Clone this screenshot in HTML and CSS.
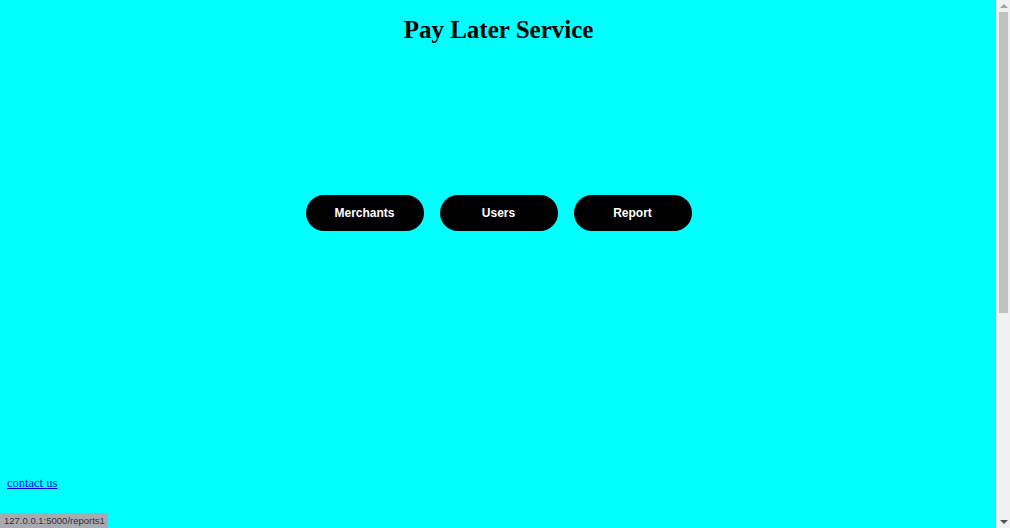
FILE: index.html
```html
<!DOCTYPE html>
<html>
<head>
<meta charset="utf-8">
<title>Pay Later Service</title>
<link rel="stylesheet" href="styles.css">
</head>
<body>
<div class="page">
  <h1 class="title">Pay Later Service</h1>
  <nav class="actions">
    <a class="btn" href="#">Merchants</a>
    <a class="btn" href="#">Users</a>
    <a class="btn" href="#">Report</a>
  </nav>
  <footer class="footer">
    <a class="contact" href="#">contact us</a>
  </footer>
</div>
<div class="scrollbar">
  <span class="arrow arrow-up"></span>
  <span class="track"><span class="thumb"></span></span>
  <span class="arrow arrow-down"></span>
</div>
<div class="status">127.0.0.1:5000/reports1</div>
</body>
</html>
```
FILE: styles.css
```css
html, body {
  margin: 0;
  padding: 0;
  background: #00ffff;
  overflow: hidden;
}
.page {
  display: flex;
  flex-direction: column;
  width: 997px;
  height: 528px;
  font-family: "Liberation Serif", "Times New Roman", serif;
}
.title {
  margin: 14px 0 0;
  text-align: center;
  font-size: 25px;
  font-weight: bold;
  color: #000;
  line-height: 32px;
}
.actions {
  display: flex;
  justify-content: center;
  gap: 16px;
  margin-top: 149px;
}
.btn {
  display: flex;
  align-items: center;
  justify-content: center;
  width: 118px;
  height: 36px;
  border-radius: 18px;
  background: #000;
  color: #fff;
  text-decoration: none;
  font-family: "Liberation Sans", Arial, sans-serif;
  font-weight: bold;
  font-size: 12px;
}
.footer {
  margin-top: 242px;
  padding-left: 7px;
}
.contact {
  font-size: 12.5px;
  color: #0000ee;
}
.scrollbar {
  position: fixed;
  top: 0;
  right: 0;
  width: 13px;
  height: 528px;
  background: #f1f1f1;
  border-left: 1px solid #e8e8e8;
  display: flex;
  flex-direction: column;
  align-items: center;
}
.arrow {
  width: 0;
  height: 0;
  border-left: 4px solid transparent;
  border-right: 4px solid transparent;
}
.arrow-up {
  margin-top: 4px;
  border-bottom: 4px solid #a3a3a3;
}
.arrow-down {
  margin-bottom: 4px;
  border-top: 4px solid #505050;
}
.track {
  flex: 1;
  width: 100%;
  display: flex;
  flex-direction: column;
  align-items: center;
  padding-top: 4px;
}
.thumb {
  width: 9px;
  height: 301px;
  background: #c1c1c1;
}
.status {
  position: fixed;
  left: 0;
  bottom: 0;
  width: 108px;
  box-sizing: border-box;
  background: #a9a9b2;
  color: #333;
  font-family: "Liberation Sans", Arial, sans-serif;
  font-size: 9.5px;
  padding: 0 0 0 4px;
  line-height: 15px;
  white-space: nowrap;
}
```
